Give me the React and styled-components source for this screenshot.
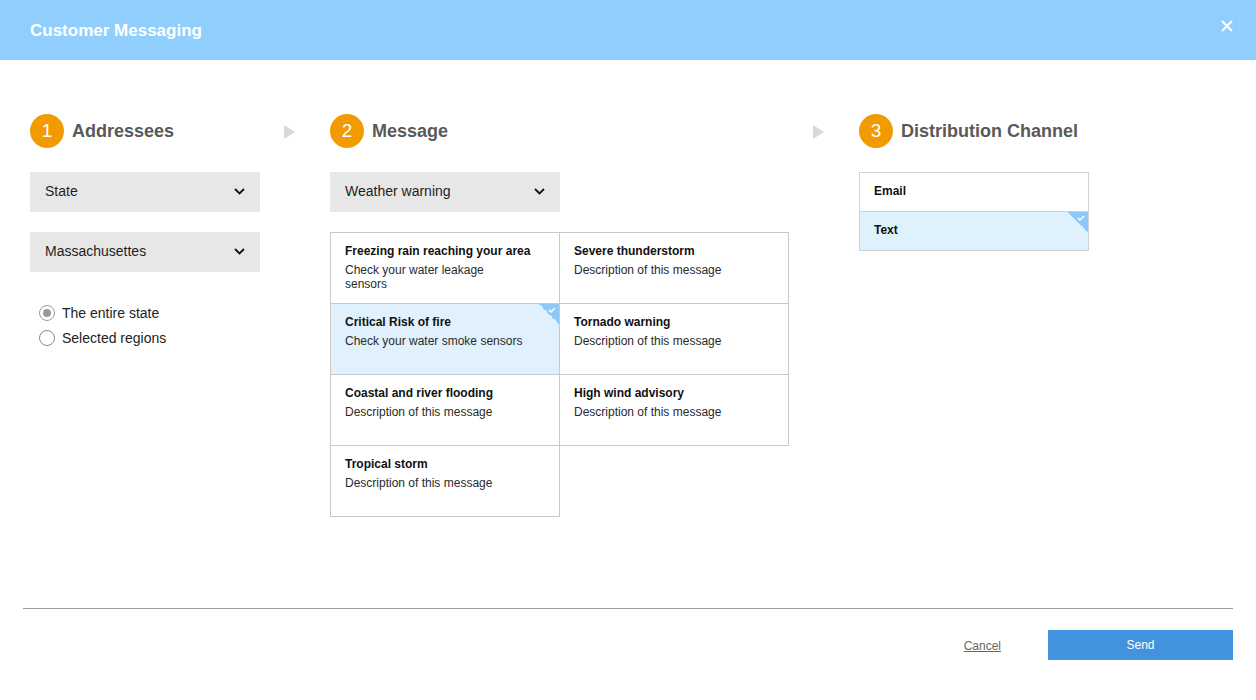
import React, { useState } from 'react';
import styled, { createGlobalStyle } from 'styled-components';

const GlobalStyle = createGlobalStyle`
  html, body {
    margin: 0;
    padding: 0;
    background: #fff;
  }
  * {
    box-sizing: border-box;
  }
`;

const Page = styled.div`
  height: 700px;
  display: flex;
  flex-direction: column;
  font-family: 'Liberation Sans', Arial, sans-serif;
  color: #222;
`;

const Header = styled.header`
  height: 60px;
  flex-shrink: 0;
  background: #90cffd;
  display: flex;
  align-items: center;
  justify-content: space-between;
  padding: 0 23px 0 30px;
`;

const HeaderTitle = styled.h1`
  margin: 2px 0 0;
  font-size: 17px;
  font-weight: bold;
  color: #fff;
`;

const CloseButton = styled.button`
  border: none;
  background: none;
  padding: 0;
  width: 12px;
  height: 12px;
  display: flex;
  cursor: pointer;
  margin-bottom: 8px;
`;

const Content = styled.main`
  flex: 1;
  display: flex;
  align-items: flex-start;
  padding: 54px 30px 0;
`;

const Column = styled.section`
  width: ${(p) => p.width}px;
  flex-shrink: 0;
`;

const ArrowSlot = styled.div`
  width: 70px;
  flex-shrink: 0;
  padding: 11px 0 0 24px;
`;

const StepHeader = styled.div`
  display: flex;
  align-items: center;
  gap: 8px;
  height: 34px;
  margin-bottom: 24px;
`;

const StepNumber = styled.span`
  width: 34px;
  height: 34px;
  border-radius: 50%;
  background: #f29b00;
  color: #fff;
  font-size: 19px;
  display: flex;
  align-items: center;
  justify-content: center;
`;

const StepTitle = styled.h2`
  margin: 0;
  font-size: 18px;
  font-weight: bold;
  color: #595959;
`;

const Select = styled.div`
  width: 230px;
  height: 40px;
  background: #e8e7e8;
  display: flex;
  align-items: center;
  justify-content: space-between;
  padding: 0 15px 2px 15px;
  font-size: 14px;
  color: #1e1e1e;
  margin-bottom: ${(p) => p.gap || 0}px;
  cursor: pointer;
`;

const RadioGroup = styled.div`
  display: flex;
  flex-direction: column;
  gap: 8px;
  padding: 32px 0 0 9px;
`;

const RadioRow = styled.label`
  display: flex;
  align-items: center;
  gap: 7px;
  font-size: 14px;
  color: #222;
  height: 17px;
  cursor: pointer;
`;

const RadioCircle = styled.span`
  width: 16px;
  height: 16px;
  border-radius: 50%;
  border: 1.5px solid ${(p) => (p.checked ? '#9a9a9a' : '#8a8a8a')};
  display: flex;
  align-items: center;
  justify-content: center;
  &::after {
    content: '';
    width: 8px;
    height: 8px;
    border-radius: 50%;
    background: ${(p) => (p.checked ? '#9a9a9a' : 'transparent')};
  }
`;

const MessageGrid = styled.div`
  display: grid;
  grid-template-columns: 229px 229px;
  width: 459px;
  border-top: 1px solid #c9c9c9;
  border-left: 1px solid #c9c9c9;
`;

const MessageCell = styled.div`
  position: relative;
  height: 71px;
  padding: 11px 14px 0 14px;
  border-right: 1px solid #c9c9c9;
  border-bottom: 1px solid #c9c9c9;
  background: ${(p) => (p.selected ? '#e0f1fd' : '#fff')};
  cursor: pointer;
`;

const CellTitle = styled.div`
  font-size: 12px;
  font-weight: bold;
  line-height: 14px;
  color: #111;
  margin-bottom: 5px;
  white-space: nowrap;
`;

const CellText = styled.div`
  font-size: 12px;
  line-height: 14px;
  color: #2a2a2a;
  max-width: 180px;
`;

const Corner = styled.span`
  position: absolute;
  top: 0;
  right: 0;
  width: 20px;
  height: 20px;
  background: linear-gradient(to bottom left, #8cc8f8 50%, transparent 50%);
  display: flex;
  justify-content: flex-end;
  padding: 3px 3px 0 0;
`;

const ChannelList = styled.div`
  width: 230px;
  border: 1px solid #cdd3d8;
`;

const ChannelRow = styled.div`
  position: relative;
  height: ${(p) => (p.last ? 38 : 39)}px;
  display: flex;
  align-items: center;
  padding: 0 14px 2px;
  font-size: 12px;
  font-weight: bold;
  color: #111;
  background: ${(p) => (p.selected ? '#dff1fd' : '#fff')};
  border-bottom: ${(p) => (p.last ? 'none' : '1px solid #c9d3dc')};
  cursor: pointer;
`;

const Footer = styled.footer`
  margin: 0 23px;
  border-top: 1px solid #9c9c9c;
  padding: 21px 0 40px;
  display: flex;
  justify-content: flex-end;
  align-items: center;
  gap: 47px;
`;

const CancelLink = styled.a`
  font-size: 12px;
  color: #666;
  text-decoration: underline;
  cursor: pointer;
  padding-top: 2px;
`;

const SendButton = styled.button`
  width: 185px;
  height: 30px;
  border: none;
  background: #4392de;
  color: #fff;
  font-family: inherit;
  font-size: 12px;
  cursor: pointer;
`;

const Chevron = () => (
  <svg width="11" height="7" viewBox="0 0 11 7" fill="none">
    <polyline points="1,1 5.5,5.5 10,1" stroke="#111" strokeWidth="1.8" />
  </svg>
);

const Arrow = () => (
  <svg width="11" height="14" viewBox="0 0 11 14">
    <polygon points="0,0 11,7 0,14" fill="#d9d9d9" />
  </svg>
);

const Check = () => (
  <svg width="8" height="6" viewBox="0 0 8 6" fill="none">
    <polyline points="1,3 3,5 7,1" stroke="#fff" strokeWidth="1.4" />
  </svg>
);

const messages = [
  { title: 'Freezing rain reaching your area', text: 'Check your water leakage sensors' },
  { title: 'Severe thunderstorm', text: 'Description of this message' },
  { title: 'Critical Risk of fire', text: 'Check your water smoke sensors' },
  { title: 'Tornado warning', text: 'Description of this message' },
  { title: 'Coastal and river flooding', text: 'Description of this message' },
  { title: 'High wind advisory', text: 'Description of this message' },
  { title: 'Tropical storm', text: 'Description of this message' },
];

const channels = ['Email', 'Text'];

const App = () => {
  const [scope, setScope] = useState('state');
  const [message, setMessage] = useState(2);
  const [channel, setChannel] = useState('Text');

  return (
    <Page>
      <GlobalStyle />
      <Header>
        <HeaderTitle>Customer Messaging</HeaderTitle>
        <CloseButton aria-label="Close">
          <svg width="12" height="12" viewBox="0 0 12 12">
            <path d="M1 1L11 11M11 1L1 11" stroke="#fff" strokeWidth="2" />
          </svg>
        </CloseButton>
      </Header>

      <Content>
        <Column width={230}>
          <StepHeader>
            <StepNumber>1</StepNumber>
            <StepTitle>Addressees</StepTitle>
          </StepHeader>
          <Select gap={20}>
            State
            <Chevron />
          </Select>
          <Select>
            Massachusettes
            <Chevron />
          </Select>
          <RadioGroup>
            <RadioRow onClick={() => setScope('state')}>
              <RadioCircle checked={scope === 'state'} />
              The entire state
            </RadioRow>
            <RadioRow onClick={() => setScope('regions')}>
              <RadioCircle checked={scope === 'regions'} />
              Selected regions
            </RadioRow>
          </RadioGroup>
        </Column>

        <ArrowSlot>
          <Arrow />
        </ArrowSlot>

        <Column width={459}>
          <StepHeader>
            <StepNumber>2</StepNumber>
            <StepTitle>Message</StepTitle>
          </StepHeader>
          <Select gap={20}>
            Weather warning
            <Chevron />
          </Select>
          <MessageGrid>
            {messages.map((m, i) => (
              <MessageCell key={m.title} selected={message === i} onClick={() => setMessage(i)}>
                <CellTitle>{m.title}</CellTitle>
                <CellText>{m.text}</CellText>
                {message === i && (
                  <Corner>
                    <Check />
                  </Corner>
                )}
              </MessageCell>
            ))}
          </MessageGrid>
        </Column>

        <ArrowSlot>
          <Arrow />
        </ArrowSlot>

        <Column width={230}>
          <StepHeader>
            <StepNumber>3</StepNumber>
            <StepTitle>Distribution Channel</StepTitle>
          </StepHeader>
          <ChannelList>
            {channels.map((c, i) => (
              <ChannelRow
                key={c}
                selected={channel === c}
                last={i === channels.length - 1}
                onClick={() => setChannel(c)}
              >
                {c}
                {channel === c && (
                  <Corner>
                    <Check />
                  </Corner>
                )}
              </ChannelRow>
            ))}
          </ChannelList>
        </Column>
      </Content>

      <Footer>
        <CancelLink>Cancel</CancelLink>
        <SendButton>Send</SendButton>
      </Footer>
    </Page>
  );
};

export default App;
